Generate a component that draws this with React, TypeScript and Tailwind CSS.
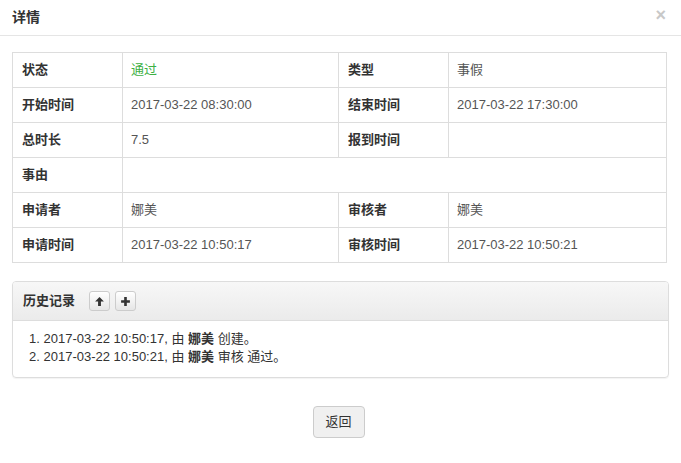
export default function App() {
  const rows: [string, React.ReactNode, string?, React.ReactNode?][] = [
    ['状态', <span className="text-[#3cb043]">通过</span>, '类型', '事假'],
    ['开始时间', '2017-03-22 08:30:00', '结束时间', '2017-03-22 17:30:00'],
    ['总时长', '7.5', '报到时间', ''],
    ['事由', ''],
    ['申请者', '娜美', '审核者', '娜美'],
    ['申请时间', '2017-03-22 10:50:17', '审核时间', '2017-03-22 10:50:21'],
  ]

  return (
    <div
      className="w-[681px] h-[463px] bg-white text-[13px] text-[#333]"
      style={{ fontFamily: '"Liberation Sans", Arial, "Noto Sans CJK SC", sans-serif' }}
    >
      <div className="h-[36px] flex items-center justify-between px-[12px] border-b border-[#e5e5e5]">
        <h4 className="text-[14px] font-bold">详情</h4>
        <span className="text-[#c8c8c8] text-[18px] font-bold leading-none mr-[3px] -mt-[6px]">×</span>
      </div>

      <div className="px-[12px] pt-[16px]">
        <table className="w-[654px] border-collapse table-fixed">
          <colgroup>
            <col className="w-[110px]" />
            <col className="w-[216px]" />
            <col className="w-[110px]" />
            <col className="w-[218px]" />
          </colgroup>
          <tbody>
            {rows.map((r, i) => (
              <tr key={i} className="h-[35px]">
                <td className="border border-[#ddd] px-[9px] font-bold">{r[0]}</td>
                {r[2] === undefined ? (
                  <td colSpan={3} className="border border-[#ddd] px-[8px] text-[#555]">{r[1]}</td>
                ) : (
                  <>
                    <td className="border border-[#ddd] px-[8px] text-[#555]">{r[1]}</td>
                    <td className="border border-[#ddd] px-[9px] font-bold">{r[2]}</td>
                    <td className="border border-[#ddd] px-[8px] text-[#555]">{r[3]}</td>
                  </>
                )}
              </tr>
            ))}
          </tbody>
        </table>

        <div className="mt-[18px] border border-[#ddd] rounded-[4px] shadow-[0_1px_1px_rgba(0,0,0,0.05)] overflow-hidden">
          <div className="h-[39px] flex items-center gap-[5px] px-[10px] bg-gradient-to-b from-[#f7f7f7] to-[#ebebeb] border-b border-[#ddd]">
            <span className="font-bold mr-[9px]">历史记录</span>
            <button className="w-[21px] h-[20px] flex items-center justify-center border border-[#ccc] rounded-[3px] bg-gradient-to-b from-white to-[#e6e6e6]">
              <svg width="11" height="11" viewBox="0 0 10 10">
                <path d="M5 1 L9 5 L6.3 5 L6.3 9 L3.7 9 L3.7 5 L1 5 Z" fill="#333" />
              </svg>
            </button>
            <button className="w-[21px] h-[20px] flex items-center justify-center border border-[#ccc] rounded-[3px] bg-gradient-to-b from-white to-[#e6e6e6]">
              <svg width="11" height="11" viewBox="0 0 10 10">
                <path d="M3.8 1 H6.2 V3.8 H9 V6.2 H6.2 V9 H3.8 V6.2 H1 V3.8 H3.8 Z" fill="#333" />
              </svg>
            </button>
          </div>
          <ol className="list-decimal list-inside pl-[16px] pt-[9px] pb-[11px] leading-[18px] text-[#333]">
            <li>2017-03-22 10:50:17, 由 <b>娜美</b> 创建。</li>
            <li>2017-03-22 10:50:21, 由 <b>娜美</b> 审核 通过。</li>
          </ol>
        </div>

        <div className="flex justify-center mt-[28px] pr-[4px]">
          <button className="w-[52px] h-[32px] border border-[#ccc] rounded-[4px] bg-[#f0f0f0] text-[#333]">
            返回
          </button>
        </div>
      </div>
    </div>
  )
}
